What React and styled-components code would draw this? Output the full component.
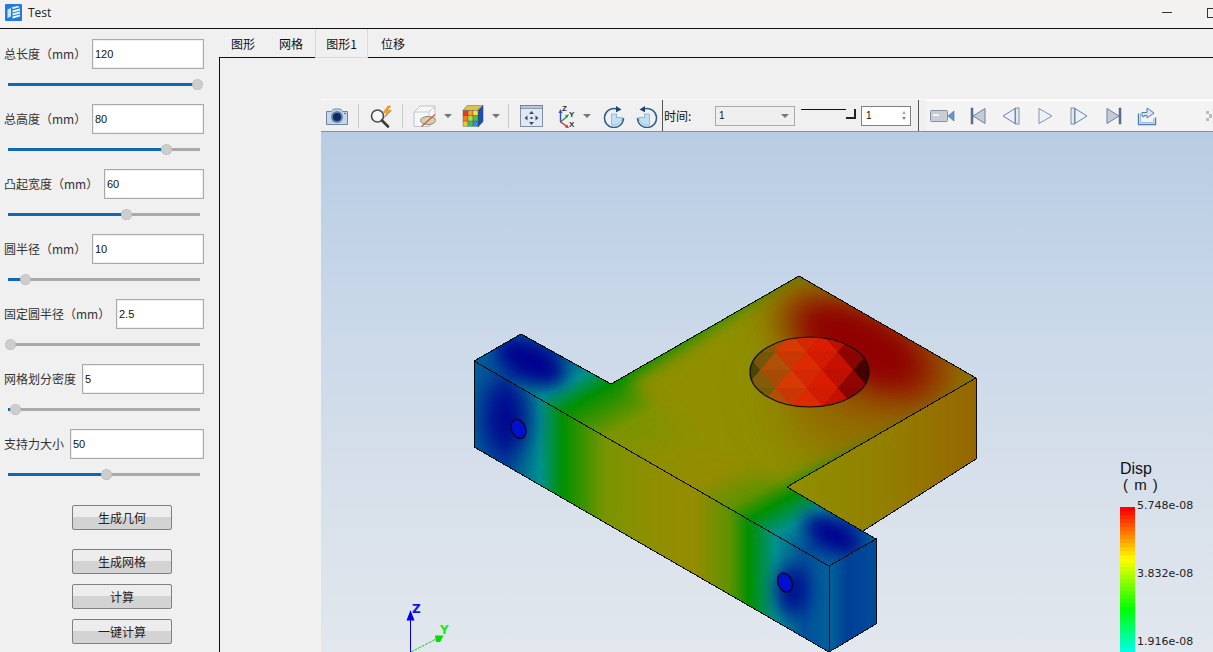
import React from 'react';
import styled, { createGlobalStyle } from 'styled-components';

const UI_FONT = `'Noto Sans CJK SC', 'Noto Sans', sans-serif`;

const GlobalStyle = createGlobalStyle`
  html, body {
    margin: 0;
    padding: 0;
    background: #f0f0f0;
    overflow: hidden;
  }
  * {
    box-sizing: border-box;
  }
`;

const Page = styled.div`
  width: 1213px;
  height: 652px;
  display: flex;
  flex-direction: column;
  overflow: hidden;
  font-family: ${UI_FONT};
  background: #f0f0f0;
`;

const TitleBar = styled.div`
  flex: none;
  height: 29px;
  display: flex;
  align-items: center;
  padding: 0 0 3px 5px;
  background: #f4f2f0;
  border-bottom: 1px solid #111;
`;

const TitleText = styled.span`
  margin-left: 6px;
  font-family: 'Open Sans', sans-serif;
  font-size: 12px;
  color: #222;
`;

const WindowControls = styled.div`
  margin-left: auto;
  display: flex;
  align-items: center;
`;

const Minimize = styled.div`
  width: 10px;
  height: 1px;
  background: #333;
  margin-right: 35px;
`;

const Maximize = styled.div`
  width: 6px;
  height: 10px;
  border: 1px solid #333;
  border-right: none;
`;

const Main = styled.div`
  flex: 1;
  min-height: 0;
  display: flex;
`;

const Sidebar = styled.div`
  flex: none;
  width: 219px;
  padding-top: 10px;
  display: flex;
  flex-direction: column;
`;

const Field = styled.div`
  height: 65px;
  flex: none;
`;

const FieldRow = styled.div`
  height: 30px;
  display: flex;
  align-items: center;
  padding: 0 15px 0 4px;
`;

const FieldLabel = styled.label`
  flex: none;
  width: ${(p) => p.$w}px;
  margin-top: -2px;
  font-size: 12px;
  color: #333;
  white-space: nowrap;
`;

const FieldInput = styled.input`
  flex: 1;
  min-width: 0;
  height: 30px;
  padding: 0 2px;
  border: 1px solid #a9a9a9;
  box-shadow: inset 0 0 0 1px #efefef;
  outline: none;
  border-radius: 0;
  background: #fff;
  font-family: 'Liberation Sans', sans-serif;
  font-size: 11px;
  color: #111;
`;

const SliderWrap = styled.div`
  position: relative;
  height: 3px;
  margin: 14px 19px 0 8px;
  background: #a9a9a9;
`;

const SliderFill = styled.div`
  height: 3px;
  background: #0f67b5;
`;

const SliderThumb = styled.div`
  position: absolute;
  top: -4px;
  width: 11px;
  height: 11px;
  margin-left: -5px;
  border-radius: 50%;
  background: #cdcdcd;
  border: 1px dotted #b4b4b4;
`;

const ButtonColumn = styled.div`
  display: flex;
  flex-direction: column;
  align-items: flex-start;
  padding: 11px 0 0 72px;
`;

const ActionButton = styled.button`
  width: 100px;
  height: 25px;
  margin-bottom: ${(p) => p.$after}px;
  padding: 0;
  border: 1px solid #7f7f7f;
  border-radius: 2px;
  background: linear-gradient(#ededed 0 48%, #d3d3d3 48% 100%);
  font-family: ${UI_FONT};
  font-size: 12px;
  color: #222;
`;

const Content = styled.div`
  flex: 1;
  min-width: 0;
  display: flex;
  flex-direction: column;
`;

const TabBar = styled.div`
  flex: none;
  height: 28px;
  display: flex;
`;

const Tab = styled.div`
  position: relative;
  z-index: 1;
  width: ${(p) => p.$w}px;
  height: ${(p) => (p.$active ? 29 : 28)}px;
  display: flex;
  align-items: center;
  justify-content: center;
  font-size: 12px;
  color: #111;
  background: #f0f0f0;
  ${(p) => p.$active && `
    border: 1px solid #dadada;
    border-top: none;
  `}
`;

const Frame = styled.div`
  flex: 1;
  min-height: 0;
  display: flex;
  flex-direction: column;
  padding: 41px 0 0 101px;
  border-top: 1px solid #111;
  border-left: 1px solid #111;
  background: #f0f0f0;
`;

const ViewerToolbar = styled.div`
  flex: none;
  height: 33px;
  display: flex;
  align-items: center;
  background: #f0f0f0;
  border-top: 1px solid #fafafa;
  border-bottom: 1px solid #8c8c8c;
  white-space: nowrap;
`;

const ToolSlot = styled.div`
  flex: none;
  display: flex;
  margin-left: ${(p) => p.$ml}px;
`;

const ToolSep = styled.div`
  flex: none;
  width: 1px;
  height: 24px;
  margin-left: ${(p) => p.$ml}px;
  background: #c9c9c9;
`;

const DarkSep = styled.div`
  flex: none;
  align-self: stretch;
  width: 1px;
  margin-left: ${(p) => p.$ml}px;
  background: #555;
`;

const Caret = styled.div`
  flex: none;
  margin-left: ${(p) => p.$ml}px;
  width: 0;
  height: 0;
  border-left: 4px solid transparent;
  border-right: 4px solid transparent;
  border-top: 4px solid #777;
`;

const TimeLabel = styled.span`
  flex: none;
  width: 51px;
  margin-left: 1px;
  font-size: 12px;
  color: #111;
`;

const Combo = styled.div`
  flex: none;
  width: 80px;
  height: 20px;
  display: flex;
  align-items: center;
  justify-content: space-between;
  padding: 0 5px 0 3px;
  border: 1px solid #a9a9a9;
  background: #efefef;
  font-family: 'Liberation Sans', sans-serif;
  font-size: 10px;
  color: #111;
`;

const TimeSlider = styled.div`
  flex: none;
  display: flex;
  align-items: flex-start;
  height: 11px;
  margin: -3px 0 0 6px;
`;

const TimeLine = styled.div`
  width: 45px;
  height: 1px;
  background: #111;
`;

const TimeHandle = styled.div`
  width: 10px;
  height: 10px;
  border-right: 2px solid #222;
  border-bottom: 2px solid #222;
`;

const Spin = styled.div`
  flex: none;
  width: 50px;
  height: 20px;
  margin-left: 5px;
  display: flex;
  align-items: center;
  justify-content: space-between;
  padding: 0 4px;
  border: 1px solid #808080;
  background: #fff;
  font-family: 'Liberation Sans', sans-serif;
  font-size: 10px;
  color: #111;
`;

const SpinArrows = styled.div`
  display: flex;
  flex-direction: column;
  gap: 3px;
`;

const SpinArrow = styled.div`
  width: 0;
  height: 0;
  border-left: 2px solid transparent;
  border-right: 2px solid transparent;
  ${(p) => (p.$up ? 'border-bottom: 3px solid #aaa;' : 'border-top: 3px solid #888;')}
`;

const PlayerBar = styled.div`
  flex: 1;
  align-self: stretch;
  display: flex;
  align-items: center;
  margin-left: 7px;
  background: #f3f3f3;
  border-top: 1px solid #fff;
`;

const Viewport = styled.div`
  flex: 1;
  min-height: 0;
  position: relative;
  overflow: hidden;
  background: linear-gradient(#b8cce3 0%, #c9d8e9 35%, #d6dfea 65%, #e2e7ee 100%);
`;

const ModelSvg = styled.svg`
  display: block;
  width: 892px;
  height: 520px;
`;

const Legend = styled.div`
  position: absolute;
  left: 799px;
  top: 328px;
  font-family: 'Liberation Sans', sans-serif;
  color: #111;
`;

const LegendTitle = styled.div`
  font-size: 16px;
  line-height: 17px;
`;

const LegendUnit = styled.div`
  padding-left: 3px;
  margin-bottom: 14px;
  font-size: 15px;
  line-height: 16px;
  word-spacing: 2px;
  white-space: nowrap;
`;

const bandStops = () => {
  const anchors = [
    [0, [255, 0, 0]],
    [50, [255, 255, 0]],
    [100, [0, 255, 0]],
    [146, [0, 255, 255]],
  ];
  const out = [];
  for (let y = 0; y < 146; y += 4) {
    const i = anchors.findIndex((a, n) => y >= a[0] && y < anchors[n + 1][0]);
    const [a, b] = [anchors[i], anchors[i + 1]];
    const t = (y - a[0]) / (b[0] - a[0]);
    const c = a[1].map((v, k) => Math.round(v + (b[1][k] - v) * t));
    out.push(`rgb(${c.join(',')}) ${y}px ${y + 4}px`);
  }
  return out.join(',');
};

const LegendBody = styled.div`
  position: relative;
  width: 15px;
  height: 146px;
  background: linear-gradient(${bandStops()});
`;

const LegendValue = styled.span`
  position: absolute;
  left: 17px;
  top: ${(p) => p.$top}px;
  font-family: 'DejaVu Sans', sans-serif;
  font-size: 11px;
  line-height: 13px;
  color: #222;
  white-space: nowrap;
`;

const Icon = ({ w = 24, h = 24, children }) => (
  <svg width={w} height={h} viewBox={`0 0 ${w} ${h}`} fill="none">
    {children}
  </svg>
);

const AppIcon = () => (
  <Icon w={17} h={17}>
    <rect width="17" height="17" rx="1" fill="#1f7be0" />
    <path d="M2.500 5.500l3.500-1.500v8.500l-3.500 1.500z" fill="#cfe4fb" />
    <path d="M6.500 3.500l6-1.500 2.500 1-7 2zM7.500 6.500l7.500-2v2l-7.500 2zM7.500 9.500l7.500-2v2l-7.500 2zM7.500 12.500l7.500-2v2l-7.500 2z" fill="#f2f8ff" />
  </Icon>
);

const CameraIcon = () => (
  <Icon w={24} h={22}>
    <path d="M1.500 6.500h5l2-2.500h7l2 2.500h5v13h-21z" fill="#c6d5e8" stroke="#6d86a8" strokeLinejoin="round" />
    <circle cx="12" cy="12" r="6" fill="#5d7fae" />
    <circle cx="12" cy="12" r="4" fill="#14285e" />
    <circle cx="20" cy="8.500" r="0.800" fill="#33527f" />
  </Icon>
);

const SearchIcon = () => (
  <Icon w={24} h={24}>
    <circle cx="8.500" cy="12" r="6" fill="#f5f5f5" stroke="#4a4a4a" strokeWidth="1.600" />
    <path d="M13 16.500l6 6" stroke="#3b3b3b" strokeWidth="2.600" strokeLinecap="round" />
    <path d="M19 2l-5 6.500h3.500l-2 5 7-7h-4l3-4.500z" fill="#f0a030" stroke="#c97a14" strokeWidth="0.500" />
  </Icon>
);

const BoxIcon = () => (
  <Icon w={24} h={24}>
    <path d="M1 8l6-6h15v15l-6 5.500H1z" fill="#f6f6f6" stroke="#bcc4cf" />
    <path d="M1 8h15v14.500M16 8l6-6" stroke="#c5ccd6" />
    <ellipse cx="15" cy="16.500" rx="7.500" ry="4" fill="#d9cfae" stroke="#8d8d7b" />
    <path d="M8.500 22.500L22 10.500" stroke="#d2533c" strokeWidth="1.200" />
  </Icon>
);

const GridCubeIcon = () => {
  const face = ['#e33a2a', '#f2a12a', '#f7e23a', '#ee7f22', '#b5d93a', '#4ac04a', '#e8c72e', '#3cbf6a', '#2f8fd8'];
  return (
    <Icon w={22} h={24}>
      <path d="M5 1.500h16l-5 5H1z" fill="#d9c34a" stroke="#6a6a4a" strokeWidth="0.500" />
      <path d="M16 6.500l5-5v16l-5 5.500z" fill="#1f4fa8" stroke="#1c3d80" strokeWidth="0.500" />
      {face.map((c, i) => (
        <rect key={c} x={1 + (i % 3) * 5} y={6.500 + Math.floor(i / 3) * 5.300} width="5" height="5.300" fill={c} stroke="#555" strokeWidth="0.400" />
      ))}
    </Icon>
  );
};

const FitIcon = () => (
  <Icon w={23} h={24}>
    <rect x="0.500" y="1.500" width="22" height="21" fill="#e3e8f0" stroke="#7f8fa6" />
    <rect x="0.500" y="1.500" width="22" height="3" fill="#b8c4d6" stroke="#5f7290" strokeWidth="0.600" />
    <path d="M11.500 7l-2.500 3h5zM11.500 21l-2.500-3h5zM4.500 14l3-2.500v5zM18.500 14l-3-2.500v5z" fill="#2f4f7a" />
    <rect x="10.500" y="13" width="2" height="2" fill="#2f4f7a" />
  </Icon>
);

const AxesIcon = () => (
  <Icon w={20} h={24}>
    <path d="M3.500 18V8" stroke="#2a4fc0" strokeWidth="1.400" />
    <path d="M3.500 5l-2 4h4z" fill="#2a4fc0" />
    <path d="M3.500 18l6-5" stroke="#1f9a3a" strokeWidth="1.400" />
    <path d="M12 10.500l-4 .8 2 3z" fill="#1f9a3a" />
    <path d="M3.500 18l6 4" stroke="#d8262a" strokeWidth="1.400" />
    <path d="M12 24l-4-.4 2-3z" fill="#d8262a" />
    <text x="5" y="7" fontFamily="Liberation Sans" fontSize="8" fontWeight="700" fill="#333">Z</text>
    <text x="12" y="13" fontFamily="Liberation Sans" fontSize="8" fontWeight="700" fill="#333">Y</text>
    <text x="12" y="23" fontFamily="Liberation Sans" fontSize="8" fontWeight="700" fill="#333">X</text>
  </Icon>
);

const RotateIcon = ({ flip }) => (
  <Icon w={22} h={24}>
    <g transform={flip ? 'translate(22 0) scale(-1 1)' : undefined}>
      <path d="M8.500 10v11a9 9 0 0 0 11-7.500h-6V10z" fill="#bfe1f6" stroke="#6a9fc6" strokeWidth="0.600" />
      <path d="M13.500 10v3.500H17" fill="#eef7fc" stroke="#6a9fc6" strokeWidth="0.600" />
      <path d="M20.500 14A9.500 9.500 0 1 1 13 4.700" stroke="#2f5c8c" strokeWidth="1.500" />
      <path d="M13 2l5.500 3.500-5.500 2.800z" fill="#1e4472" />
    </g>
  </Icon>
);

const VideoIcon = () => (
  <Icon w={25} h={18}>
    <rect x="0.500" y="3.500" width="17" height="11" rx="1" fill="#c9ced6" stroke="#8391a5" />
    <rect x="3" y="7" width="6" height="2" fill="#f3f3f3" />
    <path d="M18 9l6-5v10z" fill="#5f9bd0" stroke="#3f6f9c" strokeWidth="0.600" />
  </Icon>
);

const StepIcon = ({ bar, left, fill }) => (
  <Icon w={20} h={20}>
    <g transform={left ? 'translate(20 0) scale(-1 1)' : undefined}>
      {bar === 'double' && <rect x="2" y="2" width="3.500" height="16" fill="#e4e9f0" stroke="#7f92ad" />}
      <path d={bar === 'double' ? 'M6 2.500l12 7.500-12 7.500z' : 'M3 2.500l12 7.500-12 7.500z'} fill={fill} stroke="#6d83a3" />
      {bar === 'end' && <rect x="15" y="2" width="2" height="16" fill="#5d7090" stroke="#4f6383" strokeWidth="0.500" />}
    </g>
  </Icon>
);

const PlayIcon = () => (
  <Icon w={15} h={18}>
    <path d="M1 1.500l13 7.500-13 7.500z" fill="#eef2f8" stroke="#7d94b6" />
  </Icon>
);

const ExportIcon = () => (
  <Icon w={20} h={20}>
    <path d="M1.500 7.500v11h17v-7" stroke="#4f7fb0" strokeWidth="1.400" />
    <path d="M3.500 7.500v9h13v-4" stroke="#9fbcd8" strokeWidth="1" />
    <path d="M5 10V6.500h5V2l7 5-7 5V9.500H7V11z" fill="#dce7f3" stroke="#4f7fb0" />
  </Icon>
);

const GripIcon = () => (
  <Icon w={6} h={16}>
    <path d="M0 3h3v3H0zM3 6h3v4H3zM0 10h3v3H0z" fill="#bbb" />
  </Icon>
);

const lerpStops = (stops, u) => {
  let i = 0;
  while (i < stops.length - 2 && u > stops[i + 1][0]) i += 1;
  const [a, b] = [stops[i], stops[i + 1]];
  const t = Math.min(1, Math.max(0, (u - a[0]) / (b[0] - a[0])));
  return a[1].map((v, k) => v + (b[1][k] - v) * t);
};

const HOLE_STOPS = [
  [-1, [78, 68, 8]],
  [-0.85, [120, 92, 10]],
  [-0.6, [165, 82, 6]],
  [-0.3, [208, 56, 4]],
  [0.15, [216, 30, 2]],
  [0.55, [188, 14, 0]],
  [0.82, [125, 2, 0]],
  [1, [70, 0, 0]],
];

// triangular lattice clipped by the hole ellipse
const holeMesh = () => {
  const tris = [];
  const w = 31;
  const h = 18;
  for (let r = 0; r < 6; r += 1) {
    for (let c = -1; c < 6; c += 1) {
      const x0 = 745 + c * w + (r % 2 ? w / 2 : 0);
      const y0 = 334 + r * h;
      const sets = [
        [[x0, y0 + h], [x0 + w, y0 + h], [x0 + w / 2, y0]],
        [[x0 + w / 2, y0], [x0 + w * 1.500, y0], [x0 + w, y0 + h]],
      ];
      sets.forEach((pts, k) => {
        const cx = (pts[0][0] + pts[1][0] + pts[2][0]) / 3;
        const col = lerpStops(HOLE_STOPS, (cx - 809) / 59.500);
        const shade = 1 + (k ? -0.03 : 0.02) + ((r * 3 + c * 5) % 3) * 0.01;
        tris.push({
          points: pts.map((p) => p.join(',')).join(' '),
          fill: `rgb(${col.map((v) => Math.min(255, Math.round(v * shade))).join(',')})`,
        });
      });
    }
  }
  return tris;
};

const BAND_STOPS = [
  ['0', '#00609a'],
  ['0.09', '#004496'],
  ['0.185', '#009090'],
  ['0.25', '#009000'],
  ['0.37', '#7a9400'],
  ['0.5', '#8f8f00'],
  ['0.62', '#958c00'],
  ['0.72', '#5f9200'],
  ['0.775', '#009000'],
  ['0.85', '#009090'],
  ['0.93', '#00509a'],
  ['1', '#00609a'],
];

const TOP_FACE = '474,361 521,334 611,384 799,276 976,378 787,487 876,539 829,566';
const FRONT_FACE = '474,361 829,566 829,652 474,447';
const END_FACE = '829,566 876,539 876,624 829,652';
const WALL_FACE = '787,487 976,378 976,459 863,531';
// the stem of the T, which does not follow the bands of the arm
const STEM_AREA = '628,384 799,268 990,378 776,482 700,446';

const Model = () => (
  <ModelSvg viewBox="321 132 892 520">
    <defs>
      <linearGradient id="topBands" gradientUnits="userSpaceOnUse" x1="474" y1="361" x2="651.500" y2="668.400">
        {BAND_STOPS.map(([o, c]) => <stop key={o} offset={o} stopColor={c} />)}
      </linearGradient>
      <linearGradient id="frontBands" gradientUnits="userSpaceOnUse" x1="474" y1="0" x2="829" y2="0">
        {BAND_STOPS.map(([o, c]) => <stop key={o} offset={o} stopColor={c} />)}
      </linearGradient>
      <linearGradient id="wall" gradientUnits="userSpaceOnUse" x1="787" y1="0" x2="976" y2="0">
        <stop offset="0" stopColor="#8f8f00" />
        <stop offset="0.500" stopColor="#928000" />
        <stop offset="1" stopColor="#966600" />
      </linearGradient>
      <linearGradient id="endFace" gradientUnits="userSpaceOnUse" x1="829" y1="0" x2="876" y2="0">
        <stop offset="0" stopColor="#00649a" />
        <stop offset="0.400" stopColor="#003f96" />
        <stop offset="1" stopColor="#004c9a" />
      </linearGradient>
      <clipPath id="clipTop"><polygon points={TOP_FACE} /></clipPath>
      <clipPath id="clipFront"><polygon points={FRONT_FACE} /></clipPath>
      <clipPath id="clipHole"><ellipse cx="809.500" cy="372" rx="59.500" ry="35" /></clipPath>
      <filter id="blur9" x="-50%" y="-50%" width="200%" height="200%"><feGaussianBlur stdDeviation="9" /></filter>
      <filter id="blur12" x="-50%" y="-50%" width="200%" height="200%"><feGaussianBlur stdDeviation="12" /></filter>
      <filter id="blur20" x="-50%" y="-50%" width="200%" height="200%"><feGaussianBlur stdDeviation="20" /></filter>
      <filter id="blur28" x="-50%" y="-50%" width="200%" height="200%"><feGaussianBlur stdDeviation="28" /></filter>
    </defs>

    <polygon points={END_FACE} fill="url(#endFace)" />
    <polygon points={WALL_FACE} fill="url(#wall)" />
    <polygon points={FRONT_FACE} fill="url(#frontBands)" />

    <g clipPath="url(#clipFront)">
      <ellipse cx="506" cy="418" rx="22" ry="38" fill="#00008f" filter="url(#blur12)" opacity="0.9" />
      <ellipse cx="792" cy="590" rx="16" ry="26" fill="#00008f" filter="url(#blur9)" opacity="0.85" />
    </g>

    <polygon points={TOP_FACE} fill="url(#topBands)" />
    <g clipPath="url(#clipTop)">
      <polygon points={STEM_AREA} fill="#8f8f00" filter="url(#blur9)" />
      <ellipse cx="890" cy="370" rx="110" ry="70" fill="#936200" filter="url(#blur28)" transform="rotate(-30 890 370)" />
      <ellipse cx="860" cy="345" rx="88" ry="36" fill="#900000" filter="url(#blur20)" transform="rotate(28 860 345)" />
      <ellipse cx="860" cy="345" rx="55" ry="22" fill="#900000" filter="url(#blur12)" transform="rotate(28 860 345)" />
      <ellipse cx="530" cy="361" rx="38" ry="18" fill="#00008f" filter="url(#blur9)" transform="rotate(28 530 361)" />
      <ellipse cx="833" cy="535" rx="32" ry="15" fill="#00008f" filter="url(#blur9)" transform="rotate(28 833 535)" />
    </g>

    <g clipPath="url(#clipHole)">
      {holeMesh().map((t) => (
        <polygon key={t.points} points={t.points} fill={t.fill} stroke={t.fill} strokeWidth="0.400" />
      ))}
    </g>
    <ellipse cx="809.500" cy="372" rx="59.500" ry="35" fill="none" stroke="#111" strokeWidth="1.200" />

    <g fill="none" stroke="#0b0b0b" strokeWidth="1" shapeRendering="crispEdges">
      <polygon points={TOP_FACE} />
      <polygon points={FRONT_FACE} />
      <polygon points={END_FACE} />
      <polyline points="976,378 976,459 863,531" />
    </g>

    <ellipse cx="518.500" cy="429" rx="7" ry="10" transform="rotate(-22 518.500 429)" fill="#0010cc" stroke="#05051a" strokeWidth="1.300" />
    <ellipse cx="785" cy="582.500" rx="7" ry="10" transform="rotate(-22 785 582.500)" fill="#0010cc" stroke="#05051a" strokeWidth="1.300" />

    <path d="M410.500 652V616" stroke="#0000ee" strokeWidth="1" />
    <path d="M410.500 610l4 10.500h-8z" fill="#0000ee" />
    <text x="412" y="613" fontFamily="DejaVu Sans" fontSize="12" fontWeight="700" fill="#1111ee">Z</text>
    <path d="M411 652l27-14" stroke="#00e000" strokeWidth="1" strokeDasharray="3 1" />
    <path d="M435 635.500l8.500 0-3.500 6.500h-4z" fill="#00e000" />
    <text x="440" y="634" fontFamily="DejaVu Sans" fontSize="12" fontWeight="700" fill="#11ee11">Y</text>
  </ModelSvg>
);

const FIELDS = [
  { label: '总长度（mm）', value: '120', labelWidth: 88, percent: 98.4 },
  { label: '总高度（mm）', value: '80', labelWidth: 88, percent: 82.3 },
  { label: '凸起宽度（mm）', value: '60', labelWidth: 100, percent: 61.5 },
  { label: '圆半径（mm）', value: '10', labelWidth: 88, percent: 8.9 },
  { label: '固定圆半径（mm）', value: '2.5', labelWidth: 112, percent: 1 },
  { label: '网格划分密度', value: '5', labelWidth: 78, percent: 3.6 },
  { label: '支持力大小', value: '50', labelWidth: 66, percent: 51 },
];

const ACTIONS = [
  { text: '生成几何', after: 19 },
  { text: '生成网格', after: 10 },
  { text: '计算', after: 10 },
  { text: '一键计算', after: 0 },
];

const TABS = [
  { text: '图形', w: 48 },
  { text: '网格', w: 48 },
  { text: '图形1', w: 53, active: true },
  { text: '位移', w: 50 },
];

const LEGEND_VALUES = [
  { text: '5.748e-08', top: -8 },
  { text: '3.832e-08', top: 60 },
  { text: '1.916e-08', top: 128 },
];

export default function App() {
  return (
    <Page>
      <GlobalStyle />
      <TitleBar>
        <AppIcon />
        <TitleText>Test</TitleText>
        <WindowControls>
          <Minimize />
          <Maximize />
        </WindowControls>
      </TitleBar>
      <Main>
        <Sidebar>
          {FIELDS.map((f) => (
            <Field key={f.label}>
              <FieldRow>
                <FieldLabel $w={f.labelWidth}>{f.label}</FieldLabel>
                <FieldInput value={f.value} readOnly />
              </FieldRow>
              <SliderWrap>
                <SliderFill style={{ width: `${f.percent}%` }} />
                <SliderThumb style={{ left: `${f.percent}%` }} />
              </SliderWrap>
            </Field>
          ))}
          <ButtonColumn>
            {ACTIONS.map((a) => (
              <ActionButton key={a.text} $after={a.after}>{a.text}</ActionButton>
            ))}
          </ButtonColumn>
        </Sidebar>
        <Content>
          <TabBar>
            {TABS.map((t) => (
              <Tab key={t.text} $w={t.w} $active={t.active}>{t.text}</Tab>
            ))}
          </TabBar>
          <Frame>
            <ViewerToolbar>
              <ToolSlot $ml={4}><CameraIcon /></ToolSlot>
              <ToolSep $ml={9} />
              <ToolSlot $ml={10}><SearchIcon /></ToolSlot>
              <ToolSep $ml={9} />
              <ToolSlot $ml={10}><BoxIcon /></ToolSlot>
              <Caret $ml={7} />
              <ToolSlot $ml={10}><GridCubeIcon /></ToolSlot>
              <Caret $ml={8} />
              <ToolSep $ml={8} />
              <ToolSlot $ml={11}><FitIcon /></ToolSlot>
              <ToolSlot $ml={14}><AxesIcon /></ToolSlot>
              <Caret $ml={6} />
              <ToolSlot $ml={12}><RotateIcon /></ToolSlot>
              <ToolSlot $ml={11}><RotateIcon flip /></ToolSlot>
              <DarkSep $ml={4} />
              <TimeLabel>时间:</TimeLabel>
              <Combo>
                1
                <Caret $ml={0} />
              </Combo>
              <TimeSlider>
                <TimeLine />
                <TimeHandle />
              </TimeSlider>
              <Spin>
                1
                <SpinArrows>
                  <SpinArrow $up />
                  <SpinArrow />
                </SpinArrows>
              </Spin>
              <DarkSep $ml={7} />
              <PlayerBar>
                <ToolSlot $ml={4}><VideoIcon /></ToolSlot>
                <ToolSlot $ml={13}><StepIcon bar="end" left fill="#c5cbd4" /></ToolSlot>
                <ToolSlot $ml={13}><StepIcon bar="double" left fill="#eef2f8" /></ToolSlot>
                <ToolSlot $ml={17}><PlayIcon /></ToolSlot>
                <ToolSlot $ml={16}><StepIcon bar="double" fill="#eef2f8" /></ToolSlot>
                <ToolSlot $ml={15}><StepIcon bar="end" fill="#c5cbd4" /></ToolSlot>
                <ToolSlot $ml={13}><ExportIcon /></ToolSlot>
                <ToolSlot $ml={49}><GripIcon /></ToolSlot>
              </PlayerBar>
            </ViewerToolbar>
            <Viewport>
              <Model />
              <Legend>
                <LegendTitle>Disp</LegendTitle>
                <LegendUnit>( m )</LegendUnit>
                <LegendBody>
                  {LEGEND_VALUES.map((v) => (
                    <LegendValue key={v.text} $top={v.top}>{v.text}</LegendValue>
                  ))}
                </LegendBody>
              </Legend>
            </Viewport>
          </Frame>
        </Content>
      </Main>
    </Page>
  );
}
